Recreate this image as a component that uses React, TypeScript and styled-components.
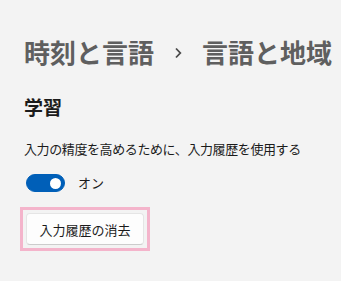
import React, { useState } from "react";
import styled, { createGlobalStyle } from "styled-components";

const GlobalStyle = createGlobalStyle`
  html, body {
    margin: 0;
    padding: 0;
    background: #f3f3f3;
  }
  body {
    font-family: "Noto Sans CJK JP", "Noto Sans", sans-serif;
    color: #1b1b1b;
  }
`;

const Page = styled.div`
  width: 341px;
  height: 281px;
  box-sizing: border-box;
  padding: 34px 0 0 24px;
  background: #f3f3f3;
  display: flex;
  flex-direction: column;
  align-items: flex-start;
  overflow: hidden;
`;

const Breadcrumb = styled.div`
  display: flex;
  align-items: center;
  height: 36px;
  gap: 20px;
`;

const Crumb = styled.span`
  font-size: 26px;
  line-height: 36px;
  font-weight: 600;
  color: #5f5f5f;
  white-space: nowrap;
`;

const Chevron = styled.svg`
  width: 8px;
  height: 12px;
  flex: none;
  margin-top: 2px;
`;

const SectionTitle = styled.h2`
  margin: 24px 0 0;
  font-size: 19px;
  line-height: 26px;
  font-weight: 700;
  color: #1b1b1b;
`;

const Description = styled.p`
  margin: 19px 0 0;
  font-size: 13px;
  line-height: 20px;
  letter-spacing: -0.4px;
  color: #1b1b1b;
`;

const ToggleRow = styled.label`
  margin-top: 14px;
  display: flex;
  align-items: center;
  gap: 13px;
  height: 20px;
  padding-left: 2px;
  cursor: pointer;
`;

const Track = styled.span<{ $on: boolean }>`
  position: relative;
  width: 39px;
  height: 18px;
  border-radius: 9px;
  box-sizing: border-box;
  background: ${(p) => (p.$on ? "#005fb8" : "transparent")};
  border: 1px solid ${(p) => (p.$on ? "#005fb8" : "#8a8a8a")};
`;

const Knob = styled.span<{ $on: boolean }>`
  position: absolute;
  top: 50%;
  width: 11px;
  height: 11px;
  margin-top: -5.5px;
  border-radius: 50%;
  background: ${(p) => (p.$on ? "#ffffff" : "#5d5d5d")};
  ${(p) => (p.$on ? "right: 3px;" : "left: 3px;")}
`;

const ToggleText = styled.span`
  font-size: 13px;
  line-height: 20px;
  color: #1b1b1b;
`;

const FocusRing = styled.div`
  margin: 14px 0 0 -4px;
  padding: 3px;
  border: 3px solid #f4b4cb;
  display: flex;
`;

const Button = styled.button`
  width: 118px;
  height: 32px;
  box-sizing: border-box;
  background: #fdfdfd;
  border: 1px solid #e5e5e5;
  border-bottom-color: #cccccc;
  border-radius: 4px;
  font-family: "Noto Sans CJK JP", "Noto Sans", sans-serif;
  font-size: 13px;
  color: #1b1b1b;
  padding: 0;
  cursor: pointer;
`;

const App: React.FC = () => {
  const [on, setOn] = useState(true);
  return (
    <>
      <GlobalStyle />
      <Page>
        <Breadcrumb>
          <Crumb>時刻と言語</Crumb>
          <Chevron viewBox="0 0 8 12">
            <path d="M2 1.5 L6.3 6 L2 10.5" fill="none" stroke="#4a4a4a" strokeWidth="1.8" />
          </Chevron>
          <Crumb>言語と地域</Crumb>
        </Breadcrumb>
        <SectionTitle>学習</SectionTitle>
        <Description>入力の精度を高めるために、入力履歴を使用する</Description>
        <ToggleRow onClick={() => setOn(!on)}>
          <Track $on={on}>
            <Knob $on={on} />
          </Track>
          <ToggleText>{on ? "オン" : "オフ"}</ToggleText>
        </ToggleRow>
        <FocusRing>
          <Button>入力履歴の消去</Button>
        </FocusRing>
      </Page>
    </>
  );
};

export default App;
